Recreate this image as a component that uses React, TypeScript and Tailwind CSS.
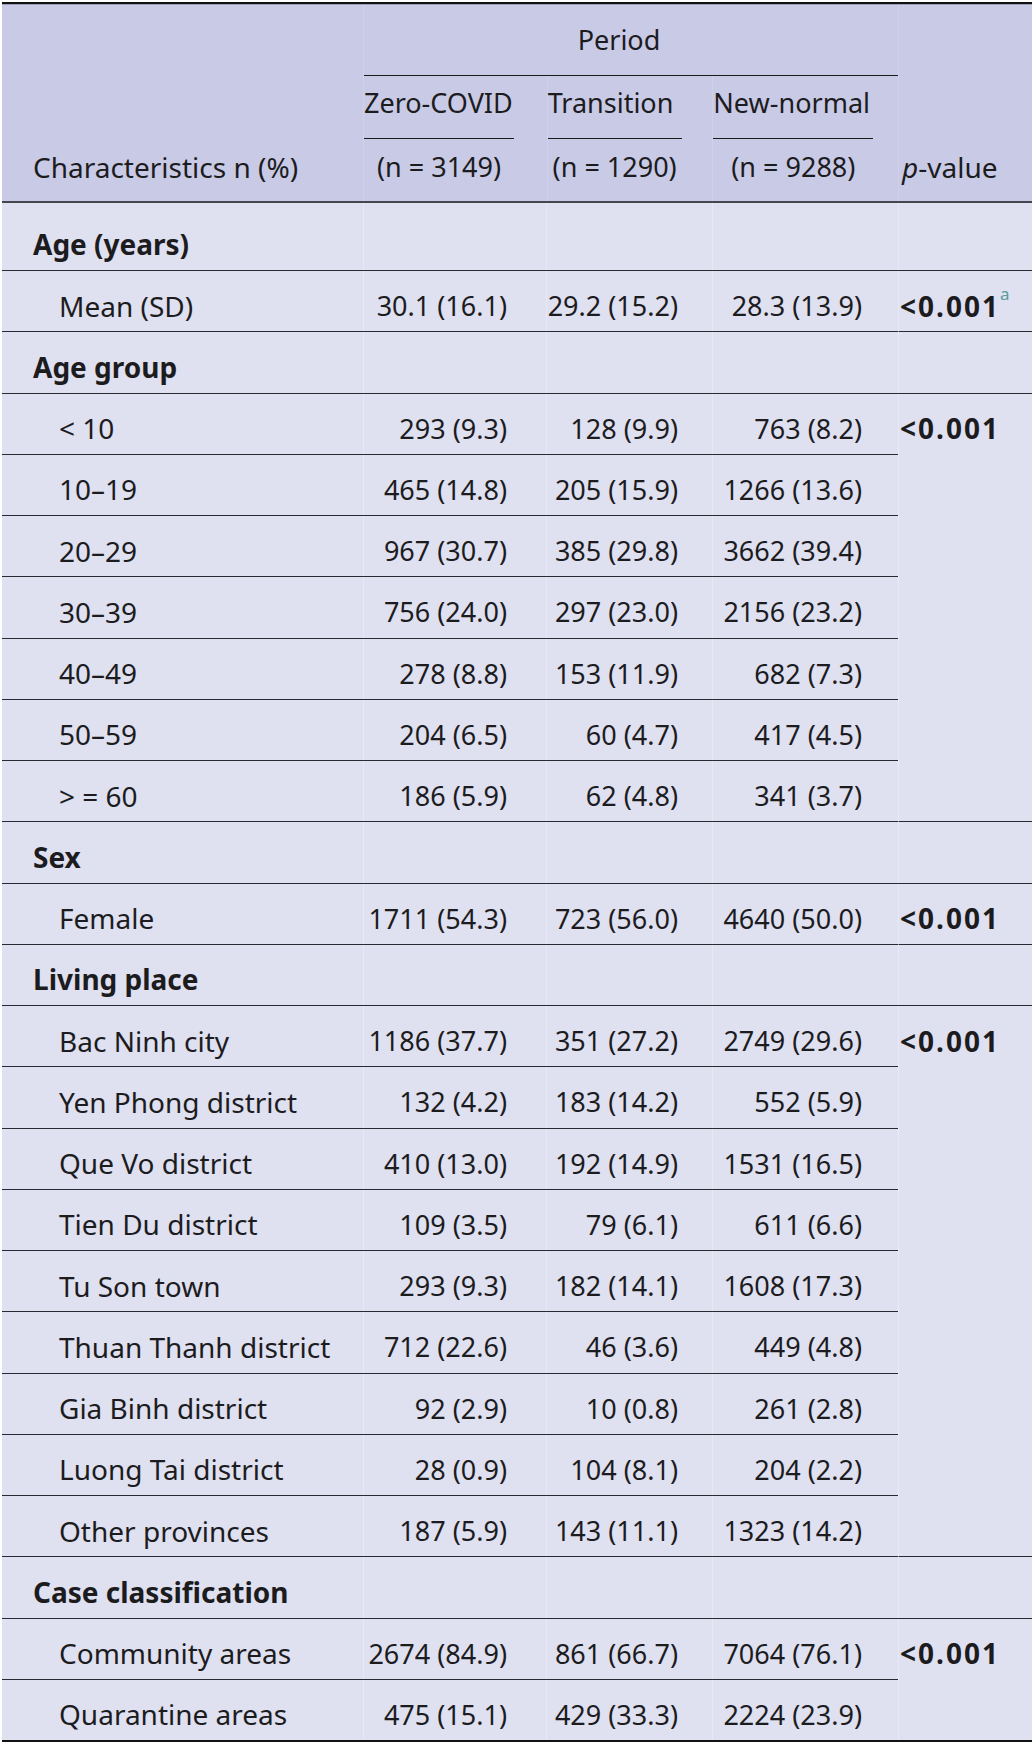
type Row = { label: string; values: [string, string, string] };
type Group = { label: string; rows: Row[]; p: string; sup?: string };

const groups: Group[] = [
  {
    label: "Age (years)",
    rows: [{ label: "Mean (SD)", values: ["30.1 (16.1)", "29.2 (15.2)", "28.3 (13.9)"] }],
    p: "<0.001",
    sup: "a",
  },
  {
    label: "Age group",
    rows: [
      { label: "< 10", values: ["293 (9.3)", "128 (9.9)", "763 (8.2)"] },
      { label: "10–19", values: ["465 (14.8)", "205 (15.9)", "1266 (13.6)"] },
      { label: "20–29", values: ["967 (30.7)", "385 (29.8)", "3662 (39.4)"] },
      { label: "30–39", values: ["756 (24.0)", "297 (23.0)", "2156 (23.2)"] },
      { label: "40–49", values: ["278 (8.8)", "153 (11.9)", "682 (7.3)"] },
      { label: "50–59", values: ["204 (6.5)", "60 (4.7)", "417 (4.5)"] },
      { label: "> = 60", values: ["186 (5.9)", "62 (4.8)", "341 (3.7)"] },
    ],
    p: "<0.001",
  },
  {
    label: "Sex",
    rows: [{ label: "Female", values: ["1711 (54.3)", "723 (56.0)", "4640 (50.0)"] }],
    p: "<0.001",
  },
  {
    label: "Living place",
    rows: [
      { label: "Bac Ninh city", values: ["1186 (37.7)", "351 (27.2)", "2749 (29.6)"] },
      { label: "Yen Phong district", values: ["132 (4.2)", "183 (14.2)", "552 (5.9)"] },
      { label: "Que Vo district", values: ["410 (13.0)", "192 (14.9)", "1531 (16.5)"] },
      { label: "Tien Du district", values: ["109 (3.5)", "79 (6.1)", "611 (6.6)"] },
      { label: "Tu Son town", values: ["293 (9.3)", "182 (14.1)", "1608 (17.3)"] },
      { label: "Thuan Thanh district", values: ["712 (22.6)", "46 (3.6)", "449 (4.8)"] },
      { label: "Gia Binh district", values: ["92 (2.9)", "10 (0.8)", "261 (2.8)"] },
      { label: "Luong Tai district", values: ["28 (0.9)", "104 (8.1)", "204 (2.2)"] },
      { label: "Other provinces", values: ["187 (5.9)", "143 (11.1)", "1323 (14.2)"] },
    ],
    p: "<0.001",
  },
  {
    label: "Case classification",
    rows: [
      { label: "Community areas", values: ["2674 (84.9)", "861 (66.7)", "7064 (76.1)"] },
      { label: "Quarantine areas", values: ["475 (15.1)", "429 (33.3)", "2224 (23.9)"] },
    ],
    p: "<0.001",
  },
];

const periods = [
  { name: "Zero-COVID", n: "(n = 3149)", col: "w-[183px]", line: "w-[150px]" },
  { name: "Transition", n: "(n = 1290)", col: "w-[166px] border-l border-[#d0d1ea]", line: "w-[134px]" },
  { name: "New-normal", n: "(n = 9288)", col: "w-[186px] border-l border-[#d0d1ea]", line: "w-[160px]" },
];

// faint column separators in the body
const sep = "border-l border-[#e8e9f6]";

function GroupHeader({ label, first }: { label: string; first: boolean }) {
  return (
    <div className={`flex border-b border-[#2a2a33] ${first ? "h-[68px]" : "h-[61.25px]"}`}>
      <div className={`w-[361px] flex items-center pl-[31px] text-[28px] font-bold ${first ? "pt-[15px]" : "pt-[9px]"}`}>
        {label}
      </div>
      <div className={`w-[183px] ${sep}`} />
      <div className={`w-[166px] ${sep}`} />
      <div className={`w-[186px] ${sep}`} />
      <div className={`w-[134px] ${sep}`} />
    </div>
  );
}

function DataRow({ row, last }: { row: Row; last: boolean }) {
  return (
    <div className={`flex ${last ? "h-[60.25px]" : "h-[61.25px] border-b border-[#2a2a33]"}`}>
      <div className="w-[361px] flex items-center pl-[57px] pt-[9px] text-[28px]">{row.label}</div>
      <div className={`w-[183px] flex items-center justify-end pr-[39px] pt-[9px] ${sep}`}>{row.values[0]}</div>
      <div className={`w-[166px] flex items-center justify-end pr-[34px] pt-[9px] ${sep}`}>{row.values[1]}</div>
      <div className={`w-[186px] flex items-center justify-end pr-[36px] pt-[9px] ${sep}`}>{row.values[2]}</div>
    </div>
  );
}

export default function App() {
  return (
    <div className="w-[1034px] min-h-[1747px] bg-white pt-[2px] px-[2px] font-['Noto_Sans',sans-serif] text-[27px] leading-none text-[#1c1c1f]">
      <div className="w-[1030px] border-b-2 border-[#111]">
        {/* header */}
        <div className="border-t-2 border-[#111] bg-[#c9cae5]">
          <div className="flex border-t border-[#9d9db8] border-b-2 border-b-[#45454f]">
            <div className="w-[361px] flex flex-col justify-end">
              <div className="h-[62px] flex items-center pl-[31px] pb-[6px] text-[28px]">Characteristics n (%)</div>
            </div>
            <div className="w-[535px] border-l border-[#d0d1ea]">
              <div className="h-[71px] border-b border-[#1a1a1a] flex items-center pb-[2px]">
                <span className="w-[510px] text-center">Period</span>
              </div>
              <div className="flex">
                {periods.map((p) => (
                  <div key={p.name} className={p.col}>
                    <div className={`${p.line} flex flex-col`}>
                      <div className="h-[63px] flex items-center pb-[9px] border-b border-[#1a1a1a] whitespace-nowrap">
                        {p.name}
                      </div>
                      <div className="h-[62px] flex items-center justify-center pb-[7px] whitespace-nowrap">
                        {p.n}
                      </div>
                    </div>
                  </div>
                ))}
              </div>
            </div>
            <div className="w-[134px] flex flex-col justify-end border-l border-[#d0d1ea]">
              <div className="h-[62px] flex items-center pl-[3px] pb-[7px] text-[28px]">
                <span className="italic">p</span>-value
              </div>
            </div>
          </div>
        </div>

        {/* body */}
        <div className="bg-[#dfe0f0]">
          {groups.map((g, gi) => {
            const lastGroup = gi === groups.length - 1;
            return (
              <div key={g.label}>
                <GroupHeader label={g.label} first={gi === 0} />
                <div className="flex">
                  <div className="w-[896px]">
                    {g.rows.map((r, ri) => (
                      <DataRow key={r.label} row={r} last={lastGroup && ri === g.rows.length - 1} />
                    ))}
                  </div>
                  <div className={`w-[134px] ${sep} ${lastGroup ? "" : "border-b border-b-[#2a2a33]"}`}>
                    <div className="h-[60.25px] flex items-center pl-[1px] pt-[9px] font-bold text-[28px]">
                      <span className="tracking-[2px]">{g.p}</span>
                      {g.sup && (
                        <sup className="self-start mt-[22px] text-[17px] font-normal text-[#5a9d9d]">{g.sup}</sup>
                      )}
                    </div>
                  </div>
                </div>
              </div>
            );
          })}
        </div>
      </div>
    </div>
  );
}
